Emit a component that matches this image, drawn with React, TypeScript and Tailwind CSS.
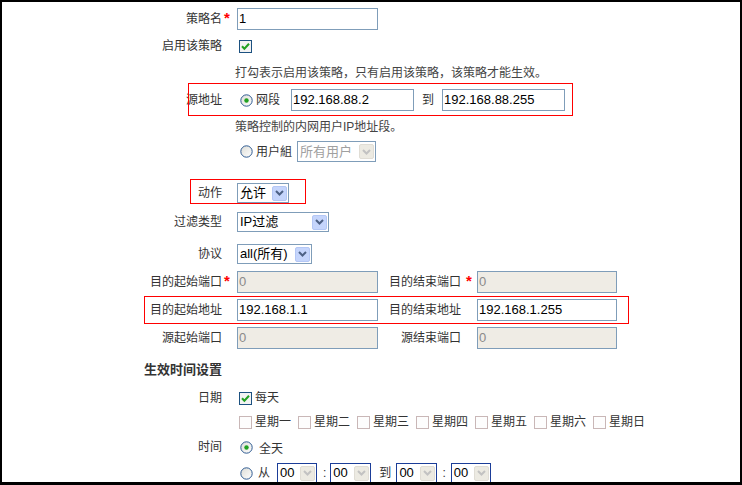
import React from "react";

function Label({ children, req, cls = "w-[220px]", reqCls = "ml-[2px]" }: { children: React.ReactNode; req?: boolean; cls?: string; reqCls?: string }) {
  return (
    <div className={`relative shrink-0 text-right whitespace-nowrap leading-[14px] ${cls}`}>
      {children}
      {req && (
        <span className={`absolute left-full top-[-1px] text-[15px] font-bold leading-[14px] text-[#f00] ${reqCls}`}>*</span>
      )}
    </div>
  );
}

function TextBox({ w, value, disabled }: { w: string; value: string; disabled?: boolean }) {
  return (
    <div
      className={`h-[22px] border border-[#7f9db9] flex items-center px-[1px] text-[13px] font-['Liberation_Sans',sans-serif] ${w} ${
        disabled ? "bg-[#efece5] text-[#8a8a8a]" : "bg-white text-black"
      }`}
    >
      {value}
    </div>
  );
}

function Arrow({ disabled }: { disabled?: boolean }) {
  return (
    <div
      className={`w-[15px] h-[15px] shrink-0 rounded-[2px] border flex items-center justify-center ${
        disabled ? "bg-[#eceae2] border-[#e0ddd5]" : "bg-[#c5d5fc] border-[#b4c7f5]"
      }`}
    >
      <svg width="9" height="6" viewBox="0 0 9 6">
        <path d="M1 1 L4.5 4.5 L8 1" fill="none" stroke={disabled ? "#c2c2c2" : "#4d6185"} strokeWidth="2" />
      </svg>
    </div>
  );
}

function Select({ w, h = "h-[20px]", text, disabled, dark, arrowDisabled }: { w: string; h?: string; text: string; disabled?: boolean; dark?: boolean; arrowDisabled?: boolean }) {
  return (
    <div className={`${w} ${h} flex items-center border bg-white pl-[2px] pr-[1px] ${dark ? "border-[#1b3d98]" : "border-[#7f9db9]"}`}>
      <span className={`flex-1 whitespace-nowrap text-[13px] leading-[14px] ${disabled ? "text-[#a0a0a0]" : "text-black"}`}>{text}</span>
      <Arrow disabled={disabled || arrowDisabled} />
    </div>
  );
}

function Check({ checked }: { checked?: boolean }) {
  return checked ? (
    <svg width="13" height="13" viewBox="0 0 13 13" className="shrink-0">
      <rect x="0.5" y="0.5" width="12" height="12" fill="#f3f3f3" stroke="#1c5180" />
      <path d="M3 6.2 L5.4 8.8 L10 3.8" fill="none" stroke="#21a121" strokeWidth="2" />
    </svg>
  ) : (
    <svg width="13" height="13" viewBox="0 0 13 13" className="shrink-0">
      <rect x="0.5" y="0.5" width="12" height="12" fill="#fdfdfd" stroke="#c9b7b7" />
    </svg>
  );
}

function Radio({ checked }: { checked?: boolean }) {
  return (
    <svg width="13" height="13" viewBox="0 0 13 13" className="shrink-0">
      <defs>
        <linearGradient id="rg" x1="0" y1="0" x2="1" y2="1">
          <stop offset="0" stopColor="#dcdcd6" />
          <stop offset="1" stopColor="#ffffff" />
        </linearGradient>
      </defs>
      <circle cx="6.5" cy="6.5" r="5.7" fill="url(#rg)" stroke="#2f5b92" strokeWidth="1" />
      {checked && <circle cx="6.5" cy="6.5" r="2.2" fill="#21a121" />}
    </svg>
  );
}

const days = ["星期一", "星期二", "星期三", "星期四", "星期五", "星期六", "星期日"];

export default function App() {
  return (
    <div className="w-[742px] h-[485px] box-border overflow-hidden bg-white border-solid border-black border-t-2 border-l-2 border-r-2 border-b-[3px] text-[12px] text-[#333] font-['Liberation_Sans','Noto_Sans_CJK_SC',sans-serif]">
      <div className="flex flex-col">
        {/* 策略名 */}
        <div className="mt-[6px] h-[22px] flex items-center">
          <Label req>策略名</Label>
          <div className="ml-[15px]">
            <TextBox w="w-[141px]" value="1" />
          </div>
        </div>

        {/* 启用该策略 */}
        <div className="mt-[9px] h-[14px] flex items-center">
          <Label>启用该策略</Label>
          <div className="ml-[17px] flex items-center">
            <Check checked />
          </div>
        </div>

        {/* hint */}
        <div className="mt-[13px] h-[14px] flex items-center">
          <div className="w-[220px] shrink-0" />
          <div className="ml-[13px] leading-[14px] text-[#444] whitespace-nowrap">打勾表示启用该策略，只有启用该策略，该策略才能生效。</div>
        </div>

        {/* 源地址 */}
        <div className="relative mt-[9px] h-[22px] flex items-center">
          <Label>源地址</Label>
          <div className="ml-[18px] flex items-center">
            <Radio checked />
            <span className="ml-[3px] leading-[14px]">网段</span>
            <div className="ml-[11px]">
              <TextBox w="w-[123px]" value="192.168.88.2" />
            </div>
            <span className="ml-[8px] leading-[14px]">到</span>
            <div className="ml-[8px]">
              <TextBox w="w-[123px]" value="192.168.88.255" />
            </div>
          </div>
          <div className="pointer-events-none absolute left-[186px] top-[-6px] w-[385px] h-[33px] border border-[#f00]" />
        </div>

        {/* hint 2 */}
        <div className="mt-[9px] h-[14px] flex items-center">
          <div className="w-[220px] shrink-0" />
          <div className="ml-[13px] leading-[14px] text-[#444] whitespace-nowrap">策略控制的内网用户IP地址段。</div>
        </div>

        {/* 用户组 */}
        <div className="mt-[7px] h-[21px] flex items-center">
          <div className="w-[220px] shrink-0" />
          <div className="ml-[18px] flex items-center">
            <Radio />
            <span className="ml-[3px] leading-[14px]">用户組</span>
            <div className="ml-[5px]">
              <Select w="w-[79px]" h="h-[21px]" text="所有用户" disabled />
            </div>
          </div>
        </div>

        {/* 动作 */}
        <div className="relative mt-[21px] h-[20px] flex items-center">
          <Label>动作</Label>
          <div className="ml-[15px]">
            <Select w="w-[52px]" text="允许" />
          </div>
          <div className="pointer-events-none absolute left-[188px] top-[-4px] w-[116px] h-[25px] border border-[#f00]" />
        </div>

        {/* 过滤类型 */}
        <div className="mt-[9px] h-[20px] flex items-center">
          <Label>过滤类型</Label>
          <div className="ml-[15px]">
            <Select w="w-[92px]" text="IP过滤" />
          </div>
        </div>

        {/* 协议 */}
        <div className="mt-[12px] h-[20px] flex items-center">
          <Label>协议</Label>
          <div className="ml-[15px]">
            <Select w="w-[75px]" text="all(所有)" />
          </div>
        </div>

        {/* 目的端口 */}
        <div className="mt-[7px] h-[22px] flex items-center">
          <Label req>目的起始端口</Label>
          <div className="ml-[15px]">
            <TextBox w="w-[141px]" value="0" disabled />
          </div>
          <Label req cls="w-[83px]" reqCls="ml-[5px]">目的结束端口</Label>
          <div className="ml-[16px]">
            <TextBox w="w-[140px]" value="0" disabled />
          </div>
        </div>

        {/* 目的地址 */}
        <div className="relative mt-[6px] h-[22px] flex items-center">
          <Label>目的起始地址</Label>
          <div className="ml-[15px]">
            <TextBox w="w-[141px]" value="192.168.1.1" />
          </div>
          <Label cls="w-[83px]">目的结束地址</Label>
          <div className="ml-[16px]">
            <TextBox w="w-[140px]" value="192.168.1.255" />
          </div>
          <div className="pointer-events-none absolute left-[142px] top-[-3px] w-[485px] h-[28px] border border-[#f00]" />
        </div>

        {/* 源端口 */}
        <div className="mt-[6px] h-[22px] flex items-center">
          <Label>源起始端口</Label>
          <div className="ml-[15px]">
            <TextBox w="w-[141px]" value="0" disabled />
          </div>
          <Label cls="w-[83px]">源结束端口</Label>
          <div className="ml-[16px]">
            <TextBox w="w-[140px]" value="0" disabled />
          </div>
        </div>

        {/* heading */}
        <div className="mt-[14px] h-[14px] flex items-center">
          <Label>
            <span className="font-bold text-[13px] text-[#333]">生效时间设置</span>
          </Label>
        </div>

        {/* 日期 */}
        <div className="mt-[14px] h-[14px] flex items-center">
          <Label>日期</Label>
          <div className="ml-[17px] flex items-center">
            <Check checked />
            <span className="ml-[3px] leading-[14px]">每天</span>
          </div>
        </div>

        {/* weekdays */}
        <div className="mt-[10px] h-[14px] flex items-center">
          <div className="w-[220px] shrink-0" />
          <div className="ml-[17px] flex items-center">
            {days.map((d) => (
              <div key={d} className="w-[59px] flex items-center">
                <Check />
                <span className="ml-[3px] leading-[14px] whitespace-nowrap">{d}</span>
              </div>
            ))}
          </div>
        </div>

        {/* 时间 */}
        <div className="mt-[11px] h-[14px] flex items-center">
          <Label>时间</Label>
          <div className="ml-[18px] flex items-center">
            <Radio checked />
            <span className="ml-[6px] mt-[3px] leading-[14px]">全天</span>
          </div>
        </div>

        {/* 从 */}
        <div className="mt-[9px] h-[20px] flex items-center">
          <div className="w-[220px] shrink-0" />
          <div className="ml-[18px] flex items-center">
            <Radio />
            <span className="ml-[5px] leading-[14px]">从</span>
            <div className="ml-[7px]">
              <Select w="w-[40px]" text="00" dark arrowDisabled />
            </div>
            <span className="ml-[6px] mr-[4px] leading-[14px]">:</span>
            <Select w="w-[41px]" text="00" dark arrowDisabled />
            <span className="ml-[8px] leading-[14px]">到</span>
            <div className="ml-[5px]">
              <Select w="w-[41px]" text="00" dark arrowDisabled />
            </div>
            <span className="ml-[5px] mr-[5px] leading-[14px]">:</span>
            <Select w="w-[40px]" text="00" dark arrowDisabled />
          </div>
        </div>
      </div>
    </div>
  );
}
